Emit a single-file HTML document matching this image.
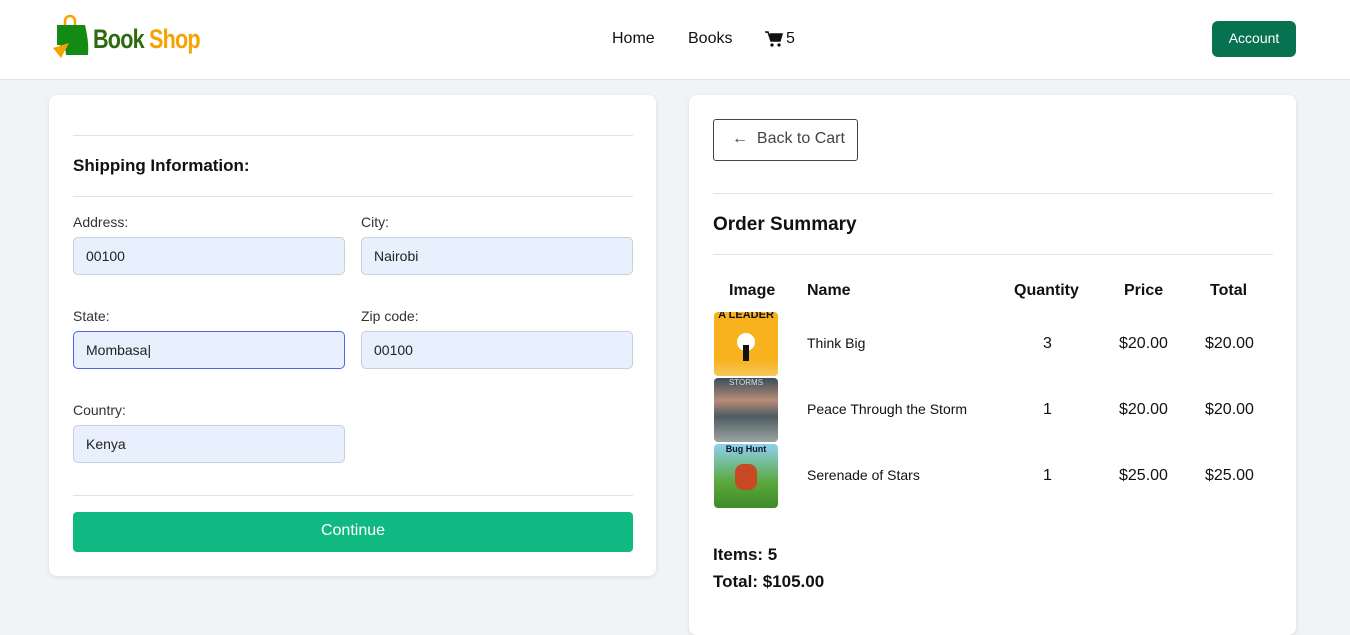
<!DOCTYPE html>
<html><head><style>
*{box-sizing:border-box;margin:0;padding:0}
body{width:1350px;height:614px;overflow:hidden;background:#f2f3f5;font-family:"Liberation Sans","DejaVu Sans",sans-serif;color:#111;position:relative}
.hdr{position:absolute;left:0;top:0;width:1350px;height:80px;background:#fff;border-bottom:1px solid #e3e3e3}
.card{position:absolute;background:#fff;border-radius:8px;box-shadow:0 1px 4px rgba(0,0,0,.1)}
.abs{position:absolute}
.hr{position:absolute;height:1px;background:#e2e2e2}
.lbl{position:absolute;font-size:14px;color:#333}
.inp{position:absolute;width:272px;height:38px;background:#e8f0fe;border:1px solid #c9cfd8;border-radius:5px;font-size:14px;padding:10px 12px;color:#222}
</style></head><body>
<div class="hdr">
 <svg class="abs" style="left:52px;top:14px" width="42" height="46" viewBox="0 0 42 46">
  <path d="M13 12 V7 a5 5 0 0 1 10 0 V12" fill="none" stroke="#f5a300" stroke-width="2.5"/>
  <path d="M5 11 H33 C35 20 37 30 36 41 H14 C14 35 12 31 5 31 Z" fill="#138a14"/>
  <path d="M1 34 L17 29 L9 44 Z" fill="#f5a300"/>
 </svg>
 <div class="abs" style="left:93px;top:24px;font-size:27px;font-weight:bold;letter-spacing:-1px;transform:scaleX(.8);transform-origin:left"><span style="color:#2f6a0f">Book</span> <span style="color:#f5a300">Shop</span></div>
 <div class="abs" style="left:612px;top:30px;font-size:16px">Home</div>
 <div class="abs" style="left:688px;top:30px;font-size:16px">Books</div>
 <svg class="abs" style="left:765px;top:31px" width="18" height="16" viewBox="0 0 18 16"><path d="M0 1h3l3 9h9l2-7H5" fill="#111" stroke="#111" stroke-width="1.5"/><circle cx="7" cy="14" r="1.6"/><circle cx="14" cy="14" r="1.6"/></svg>
 <div class="abs" style="left:786px;top:30px;font-size:16px">5</div>
 <div class="abs" style="left:1212px;top:21px;width:84px;height:36px;background:#087150;border-radius:6px;color:#fff;font-size:14px;text-align:center;line-height:34px">Account</div>
</div>

<div class="card" style="left:49px;top:95px;width:607px;height:481px">
 <div class="hr" style="left:24px;top:40px;width:560px"></div>
 <div class="abs" style="left:24px;top:61px;font-size:17px;font-weight:bold">Shipping Information:</div>
 <div class="hr" style="left:24px;top:101px;width:560px"></div>
 <div class="lbl" style="left:24px;top:119px">Address:</div>
 <div class="lbl" style="left:312px;top:119px">City:</div>
 <div class="inp" style="left:24px;top:142px">00100</div>
 <div class="inp" style="left:312px;top:142px">Nairobi</div>
 <div class="lbl" style="left:24px;top:213px">State:</div>
 <div class="lbl" style="left:312px;top:213px">Zip code:</div>
 <div class="inp" style="left:24px;top:236px;border-color:#5560e8">Mombasa|</div>
 <div class="inp" style="left:312px;top:236px">00100</div>
 <div class="lbl" style="left:24px;top:307px">Country:</div>
 <div class="inp" style="left:24px;top:330px">Kenya</div>
 <div class="hr" style="left:24px;top:400px;width:560px"></div>
 <div class="abs" style="left:24px;top:417px;width:560px;height:40px;background:#10b981;border-radius:4px;color:#fff;font-size:16px;text-align:center;line-height:38px">Continue</div>
</div>

<div class="card" style="left:689px;top:95px;width:607px;height:540px">
 <div class="abs" style="left:24px;top:24px;width:145px;height:42px;border:1px solid #444;border-radius:3px;font-size:16px;color:#444;line-height:38px;padding-left:18px">←&nbsp; Back to Cart</div>
 <div class="hr" style="left:24px;top:98px;width:560px"></div>
 <div class="abs" style="left:24px;top:119px;font-size:19px;font-weight:bold">Order Summary</div>
 <div class="hr" style="left:24px;top:159px;width:560px"></div>
 <div class="abs" style="left:40px;top:187px;font-size:16px;font-weight:bold">Image</div>
 <div class="abs" style="left:118px;top:187px;font-size:16px;font-weight:bold">Name</div>
 <div class="abs" style="left:325px;top:187px;font-size:16px;font-weight:bold">Quantity</div>
 <div class="abs" style="left:435px;top:187px;font-size:16px;font-weight:bold">Price</div>
 <div class="abs" style="left:521px;top:187px;font-size:16px;font-weight:bold">Total</div>
 <div class="abs" style="left:25px;top:217px;width:64px;height:64px;border-radius:4px;background:linear-gradient(#f7b21e 75%,#f6c85a);overflow:hidden"><div style="font-size:11px;font-weight:bold;color:#111;text-align:center;margin-top:-3px">A LEADER</div><div style="width:18px;height:18px;border-radius:50%;background:#fff;margin:12px auto 0"></div><div style="width:6px;height:16px;background:#111;margin:-6px auto 0"></div></div>
 <div class="abs" style="left:25px;top:283px;width:64px;height:64px;border-radius:4px;background:linear-gradient(#3a4c5a,#b88c78 35%,#4d5b62 60%,#9ca4a0)"><div style="font-size:8px;color:#ddd;text-align:center">STORMS</div></div>
 <div class="abs" style="left:25px;top:349px;width:64px;height:64px;border-radius:4px;background:linear-gradient(#8fd0f0,#5aa83c 60%,#3f8a2a)"><div style="font-size:9px;font-weight:bold;color:#113;text-align:center">Bug Hunt</div><div style="width:22px;height:26px;background:#c84a24;border-radius:8px;margin:10px auto 0"></div></div>
 <div class="abs" style="left:118px;top:240px;font-size:14px">Think Big</div>
 <div class="abs" style="left:118px;top:306px;font-size:14px">Peace Through the Storm</div>
 <div class="abs" style="left:118px;top:372px;font-size:14px">Serenade of Stars</div>
 <div class="abs" style="left:354px;top:240px;font-size:16px">3</div>
 <div class="abs" style="left:354px;top:306px;font-size:16px">1</div>
 <div class="abs" style="left:354px;top:372px;font-size:16px">1</div>
 <div class="abs" style="left:430px;top:240px;font-size:16px">$20.00</div>
 <div class="abs" style="left:430px;top:306px;font-size:16px">$20.00</div>
 <div class="abs" style="left:430px;top:372px;font-size:16px">$25.00</div>
 <div class="abs" style="left:516px;top:240px;font-size:16px">$20.00</div>
 <div class="abs" style="left:516px;top:306px;font-size:16px">$20.00</div>
 <div class="abs" style="left:516px;top:372px;font-size:16px">$25.00</div>
 <div class="abs" style="left:24px;top:450px;font-size:17px;font-weight:bold">Items: 5</div>
 <div class="abs" style="left:24px;top:477px;font-size:17px;font-weight:bold">Total: $105.00</div>
</div>
</body></html>
